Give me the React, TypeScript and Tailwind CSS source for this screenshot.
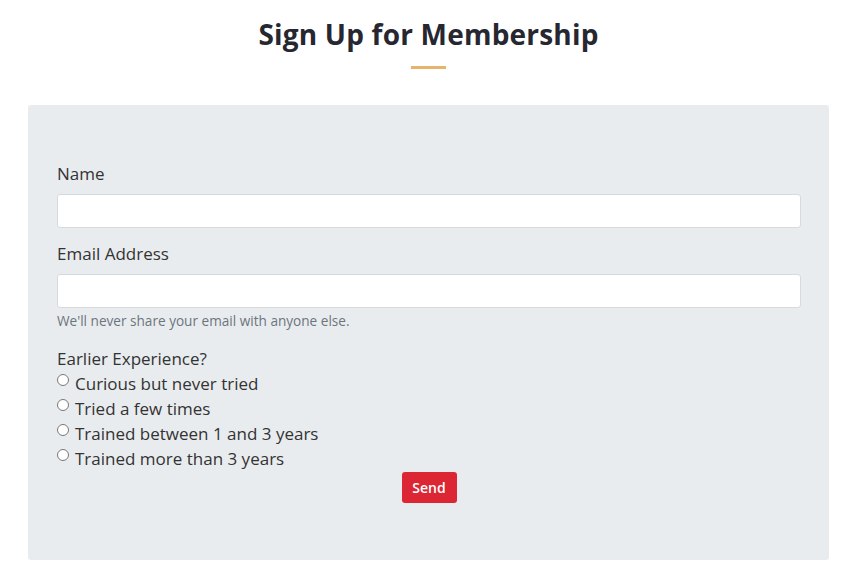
export default function App() {
  const options = [
    "Curious but never tried",
    "Tried a few times",
    "Trained between 1 and 3 years",
    "Trained more than 3 years",
  ];

  return (
    <div className="min-h-[571px] bg-white font-['Open_Sans',sans-serif] text-[#212529]">
      <div className="pt-[14px] pl-[12px] flex flex-col items-center">
        <h1 className="text-[28px] leading-[40px] font-bold text-[#262730] tracking-[0.2px]">Sign Up for Membership</h1>
        <div className="mt-[12px] w-[35px] h-[3px] bg-[#e6b46a]" />
      </div>

      <div className="ml-[28px] mt-[36px] w-[801px] bg-[#e9ecef] rounded-[3px] pl-[29px] pr-[28px] pt-[57px] pb-[57px]">
        <form>
          <div className="mb-[14px]">
            <label className="block text-[17px] leading-[24px] text-[#333] mb-[8px]">Name</label>
            <input type="text" className="block w-full h-[34px] bg-white border border-[#d6dadf] rounded-[3px] px-3" />
          </div>

          <div className="mb-[16px]">
            <label className="block text-[17px] leading-[24px] text-[#333] mb-[8px]">Email Address</label>
            <input type="email" className="block w-full h-[34px] bg-white border border-[#d6dadf] rounded-[3px] px-3" />
            <p className="mt-[3px] text-[13.6px] leading-[20px] text-[#6c757d]">We'll never share your email with anyone else.</p>
          </div>

          <div className="text-[17px] leading-[25px] text-[#333]">
            <p className="leading-[24px]">Earlier Experience?</p>
            {options.map((o) => (
              <label key={o} className="flex items-start gap-[6px]">
                <input type="radio" name="exp" className="mt-[3px] w-[12px] h-[12px] m-0" />
                <span>{o}</span>
              </label>
            ))}
          </div>

          <div className="flex justify-center mt-[1px]">
            <button type="button" className="w-[55px] h-[31px] bg-[#dc2633] text-white text-[14px] font-semibold rounded-[3px]">
              Send
            </button>
          </div>
        </form>
      </div>
    </div>
  );
}
